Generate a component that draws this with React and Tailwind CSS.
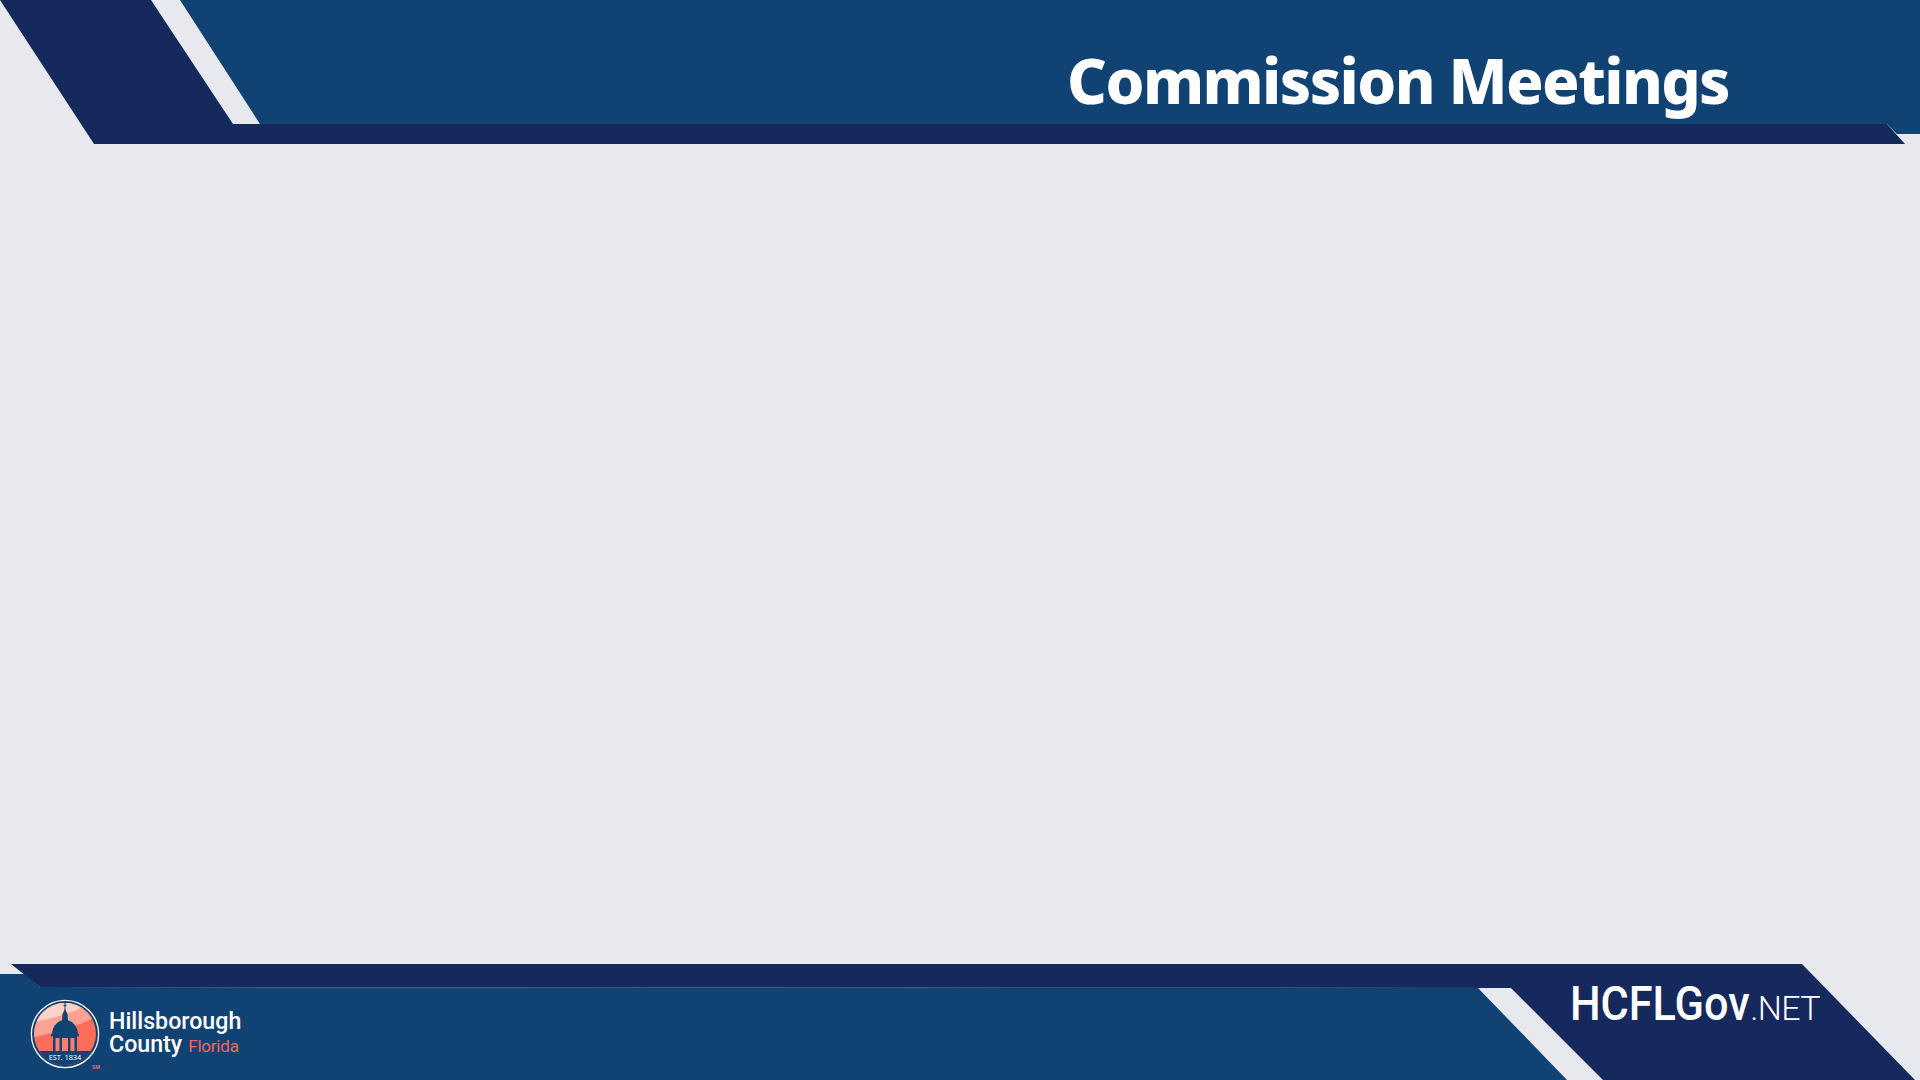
import React from 'react';

function Seal() {
  return (
    <svg viewBox="0 0 70 70" className="w-[70px] h-[70px] shrink-0 overflow-visible">
      <defs>
        <clipPath id="seal-clip">
          <circle cx="35" cy="35" r="31" />
        </clipPath>
      </defs>
      <circle cx="35" cy="35" r="33.6" fill="none" stroke="#ffffff" strokeWidth="1.3" />
      <g clipPath="url(#seal-clip)">
        <rect x="0" y="0" width="70" height="70" fill="#fe6d5a" />
        <path d="M0 39 C22 34 42 30 70 16 L70 0 L0 0 Z" fill="#fda294" />
        <path d="M0 23 C20 21 38 15 60 5 L60 0 L0 0 Z" fill="#fed2c9" />
        <rect x="0" y="52" width="70" height="18" fill="#114274" />
      </g>
      {/* dome */}
      <g fill="#114274">
        <rect x="34.5" y="4" width="1" height="7" />
        <rect x="33.4" y="6" width="3.2" height="1" />
        <path d="M32 22 L32.5 15 L35 10 L37.5 15 L38 22 Z" />
        <path d="M22 36 C22 27 28 21 35 21 C42 21 48 27 48 36 Z" />
        <rect x="21" y="35" width="28" height="2.4" />
        <rect x="23" y="37" width="24" height="15" />
      </g>
      <g fill="#fb7e6c">
        <rect x="25.5" y="39" width="4" height="13" />
        <rect x="32" y="39" width="6" height="13" />
        <rect x="40.5" y="39" width="4" height="13" />
      </g>
      <text x="35" y="60.5" textAnchor="middle" fontSize="7.4" fill="#ffffff" style={{ fontFamily: '"Noto Sans", sans-serif' }}>
        EST. 1834
      </text>
      <text x="62" y="70" fontSize="5.4" fontWeight="700" fill="#f0695c" style={{ fontFamily: '"Noto Sans", sans-serif' }}>
        SM
      </text>
    </svg>
  );
}

export default function App() {
  return (
    <div className="flex flex-col w-full h-screen overflow-hidden bg-[#e8e9ef] font-['Noto_Sans',sans-serif]">

      {/* Header */}
      <header className="relative h-[145px] shrink-0">
        <svg viewBox="0 0 1920 145" className="absolute inset-0 w-full h-full">
          <polygon points="180,0 1920,0 1920,134 1897,134 1887,124 260,124" fill="#114274" />
          <polygon points="0,0 151,0 233,124 1887,124 1905,144 94,144" fill="#16295c" />
        </svg>
        <div className="relative flex justify-end pr-[191px] pt-[40px]">
          <h1 className="text-[62px] leading-[80px] font-extrabold tracking-[-1.6px] text-white">Commission Meetings</h1>
        </div>
      </header>

      <main className="flex-1" />

      {/* Footer */}
      <footer className="relative h-[116px] shrink-0">
        <svg viewBox="0 0 1920 116" className="absolute inset-0 w-full h-full">
          <polygon points="0,10 25,10 40,23 1478,24 1567,116 0,116" fill="#114274" />
          <polygon points="11,0 1802,0 1915,116 1603,116 1511,24 40,23" fill="#16295c" />
        </svg>
        <div className="relative flex items-start justify-between h-full">
          <div className="flex items-center gap-[9px] pl-[30px] pt-[35px]">
            <Seal />
            <div className="-mt-[3px] text-white text-[23.2px] leading-[23px] font-medium font-['Roboto',sans-serif]">
              <div>Hillsborough</div>
              <div className="flex items-baseline gap-[6px]">
                <span>County</span>
                <span className="text-[17px] leading-none tracking-[-0.2px] text-[#f0695c] font-normal">Florida</span>
              </div>
            </div>
          </div>
          <div className="flex items-baseline pr-[100px] pt-[10px] text-white text-[48px] leading-[60px] font-medium font-['Roboto',sans-serif]">
            <span className="inline-block origin-right scale-x-[0.9]">HCFLGov</span>
            <span className="text-[34px] font-light tracking-[-0.6px]">.NET</span>
          </div>
        </div>
      </footer>
    </div>
  );
}
